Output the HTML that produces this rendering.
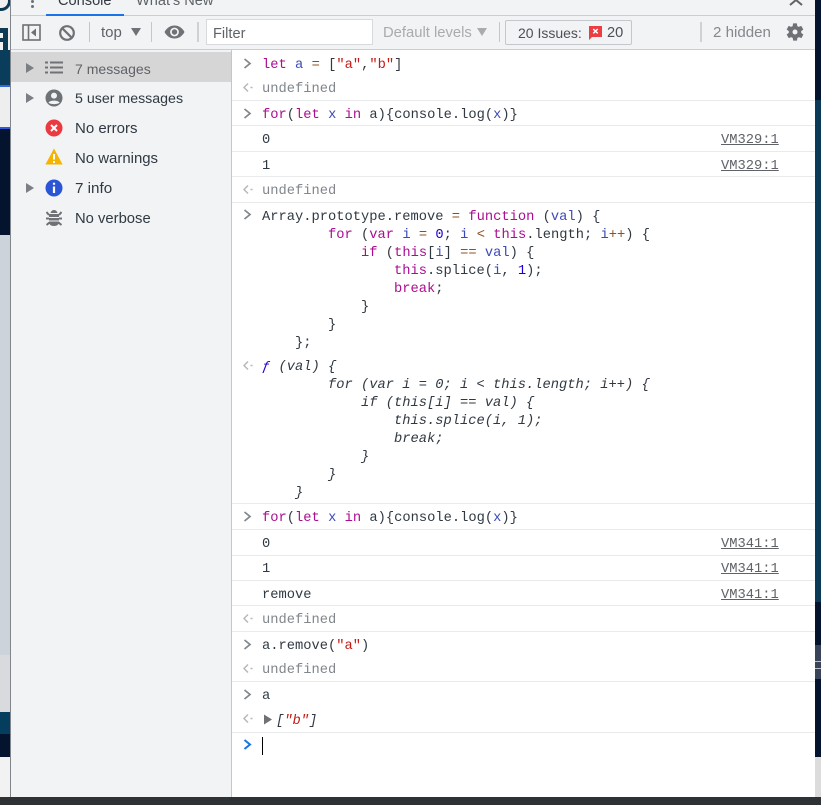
<!DOCTYPE html>
<html><head><meta charset="utf-8"><style>
html,body{margin:0;padding:0;width:821px;height:805px;overflow:hidden;background:#fff}
div,span.a,svg{position:absolute}
.s{font:14.6px/20px "Liberation Sans",sans-serif;color:#303942;white-space:pre}
.c{font:13.75px/18px "Liberation Mono",monospace;color:#303942;white-space:pre;left:262px}
.g{color:#80868b}.i{font-style:italic}
.k{color:#aa0d91}.v{color:#3a4ab8}.t{color:#c41a16}.o{color:#90501c}.n{color:#1c00cf}
.b{left:232px;width:583px;height:1px;background:#e9eaeb}
.l{left:721px;font:13.75px/18px "Liberation Mono",monospace;color:#5f6368;text-decoration:underline}
.sep{width:1px;background:#c4c6c9}
</style></head><body>
<div style="left:0;top:0;width:11px;height:805px;background:#cdd3da;overflow:hidden">
<div style="left:0;top:0;width:11px;height:56px;background:#f0f0f0"></div>
<div style="left:-6px;top:-6px;width:14px;height:14px;border:0 solid #0c3a55;border-width:0 3px 3px 0;border-radius:0 0 10px 0"></div>
<div style="left:0;top:28px;width:8px;height:22px;background:#0c3a55"></div>
<div style="left:0;top:33px;width:3px;height:5px;background:#f0f0f0"></div>
<div style="left:0;top:42px;width:3px;height:8px;background:#f0f0f0"></div>
<div style="left:0;top:50px;width:11px;height:35px;background:#0a3d5c"></div>
<div style="left:0;top:85px;width:11px;height:2px;background:#2f6be0"></div>
<div style="left:0;top:87px;width:11px;height:40px;background:#eeeeee"></div>
<div style="left:0;top:127px;width:11px;height:2px;background:#2f5ae0"></div>
<div style="left:0;top:129px;width:11px;height:106px;background:#04142f"></div>
<div style="left:0;top:655px;width:11px;height:57px;background:#d8dade"></div>
<div style="left:0;top:712px;width:11px;height:22px;background:#053d5e"></div>
<div style="left:0;top:734px;width:11px;height:23px;background:#04142f"></div>
<div style="left:0;top:757px;width:11px;height:40px;background:#f2f2f2"></div>
<div style="left:10px;top:0;width:1px;height:797px;background:#80868b"></div>
</div>
<div style="left:815px;top:0;width:6px;height:805px;background:#04142f">
<div style="left:0;top:100px;width:6px;height:502px;background:#0a3a58"></div>
<div style="left:0;top:645px;width:6px;height:34px;background:#3a4458"></div>
<div style="left:0;top:661px;width:6px;height:1px;background:#b9bdc4"></div>
<div style="left:0;top:668px;width:6px;height:1px;background:#b9bdc4"></div>
<div style="left:0;top:757px;width:6px;height:40px;background:#dcdcdc"></div>
</div>
<div style="left:0;top:797px;width:821px;height:8px;background:#2f3234"></div>

<div style="left:11px;top:0;width:804px;height:797px;background:#fff;overflow:hidden">
<div style="left:-11px;top:0;width:815px;height:797px">
<div style="left:11px;top:0;width:804px;height:49px;background:#f1f3f4"></div>
<div style="left:11px;top:15px;width:804px;height:1px;background:#cbcdd0"></div>
<div style="left:11px;top:49px;width:804px;height:1px;background:#cbcdd0"></div>
<div style="left:46px;top:14px;width:78px;height:2px;background:#1a73e8"></div>
<div class="s" style="left:58px;top:-9px;color:#303942">Console</div>
<div class="s" style="left:136px;top:-9px;color:#5f6368">What's New</div>
<div style="left:31px;top:0;width:3px;height:3px;background:#6e7175;border-radius:50%"></div>
<div style="left:31px;top:5px;width:3px;height:3px;background:#6e7175;border-radius:50%"></div>
<svg style="left:789px;top:0" width="14" height="6"><path d="M1 5 L7 0 L13 5" fill="none" stroke="#5f6368" stroke-width="2"/></svg>

<svg style="left:22px;top:24px" width="20" height="18"><rect x="1" y="1" width="17" height="15" fill="none" stroke="#6e7175" stroke-width="1.6"/><path d="M6.5 1V16" stroke="#6e7175" stroke-width="1.6"/><path d="M14 4.5V12.5L9 8.5Z" fill="#6e7175"/></svg>
<svg style="left:58px;top:24px" width="18" height="18"><circle cx="9" cy="9" r="6.8" fill="none" stroke="#6e7175" stroke-width="2.2"/><path d="M4.2 4.2L13.8 13.8" stroke="#6e7175" stroke-width="2.2"/></svg>
<div class="sep" style="left:89px;top:22px;height:20px"></div>
<div class="s" style="left:101px;top:23px;color:#5f6368;font-size:15px">top</div>
<svg style="left:130px;top:27px" width="12" height="10"><path d="M1 1H11L6 9Z" fill="#6e7175"/></svg>
<div class="sep" style="left:151px;top:22px;height:20px"></div>
<svg style="left:164px;top:23px" width="21" height="18"><path d="M0.5 9C3 4.5 6.5 2.5 10.5 2.5S18 4.5 20.5 9C18 13.5 14.5 15.5 10.5 15.5S3 13.5 0.5 9Z" fill="#6e7175"/><circle cx="10.5" cy="9" r="4.4" fill="#f1f3f4"/><circle cx="10.5" cy="9" r="2.7" fill="#6e7175"/></svg>
<div style="left:197px;top:22px;width:2px;height:20px;background:#cfd1d3"></div>
<div style="left:206px;top:19px;width:165px;height:24px;background:#fff;border:1px solid #d8dade"></div>
<div class="s" style="left:213px;top:24px;color:#5f6368">Filter</div>
<div class="s" style="left:383px;top:23px;color:#a9abae;font-size:14.8px">Default levels</div>
<svg style="left:476px;top:27px" width="12" height="10"><path d="M1 1H11L6 9Z" fill="#a9abae"/></svg>
<div class="sep" style="left:499px;top:22px;height:20px"></div>
<div style="left:505px;top:20px;width:125px;height:23px;border:1px solid #c4c7cb;border-radius:2px"></div>
<div class="s" style="left:518px;top:23px;color:#4c5157;font-size:14px">20 Issues:</div>
<svg style="left:588px;top:25px" width="15" height="15"><path d="M1 1H14V12H4L1 15Z" fill="#ea3e43"/><path d="M5.3 4L9.7 8.4M9.7 4L5.3 8.4" stroke="#fff" stroke-width="1.5"/></svg>
<div class="s" style="left:607px;top:23px;color:#4c5157">20</div>
<div style="left:700px;top:22px;width:2px;height:20px;background:#cfd1d3"></div>
<div class="s" style="left:713px;top:23px;color:#85888c;font-size:15.1px">2 hidden</div>
<svg style="left:785px;top:22px" width="20" height="20" viewBox="0 0 24 24"><path fill="#6e7175" d="M19.4 13a7.5 7.5 0 0 0 0-2l2.6-2-2.5-4.3-3 1.2a7.6 7.6 0 0 0-1.8-1L14.3 1.7H9.7L9.2 4.9a7.6 7.6 0 0 0-1.8 1l-3-1.2L2 9l2.6 2a7.5 7.5 0 0 0 0 2L2 15l2.5 4.3 3-1.2a7.6 7.6 0 0 0 1.8 1l.5 3.2h4.6l.5-3.2a7.6 7.6 0 0 0 1.8-1l3 1.2L22 15zM12 15a3 3 0 1 1 0-6 3 3 0 0 1 0 6z"/></svg>

<div style="left:11px;top:50px;width:220px;height:747px;background:#f1f3f4"></div>
<div style="left:231px;top:50px;width:1px;height:747px;background:#c4c7ca"></div>
<div style="left:11px;top:52px;width:220px;height:30px;background:#d6d6d6"></div>
<svg style="left:26px;top:62px" width="9" height="12"><path d="M0 1V11L8 6Z" fill="#7b7e82"/></svg>
<svg style="left:26px;top:92px" width="9" height="12"><path d="M0 1V11L8 6Z" fill="#7b7e82"/></svg>
<svg style="left:26px;top:182px" width="9" height="12"><path d="M0 1V11L8 6Z" fill="#7b7e82"/></svg>
<svg style="left:45px;top:60px" width="18" height="16"><path d="M0 2.5H3M5 2.5H18M0 7.5H3M5 7.5H18M0 12.5H3M5 12.5H18" stroke="#6e7175" stroke-width="2"/></svg>
<svg style="left:45px;top:89px" width="18" height="18"><circle cx="9" cy="9" r="8.5" fill="#6e7175"/><circle cx="9" cy="6.6" r="3" fill="#f1f3f4"/><path d="M3.5 13.6C5 11 13 11 14.5 13.6C13 15.6 5 15.6 3.5 13.6Z" fill="#f1f3f4"/></svg>
<svg style="left:45px;top:119px" width="18" height="18"><circle cx="9" cy="9" r="8.5" fill="#eb3941"/><path d="M6 6L12 12M12 6L6 12" stroke="#fff" stroke-width="2"/></svg>
<svg style="left:45px;top:148px" width="18" height="18"><path d="M9 .5L17.6 16.5H.4Z" fill="#f4b400"/><path d="M9 6V11.5M9 13V15" stroke="#fff" stroke-width="2"/></svg>
<svg style="left:45px;top:179px" width="18" height="18"><circle cx="9" cy="9" r="8.5" fill="#2a56d6"/><path d="M9 7.5V14M9 3.8V5.8" stroke="#fff" stroke-width="2.2"/></svg>
<svg style="left:46px;top:209px" width="16" height="18"><path d="M3 5H13V13C13 15.5 11 17 8 17S3 15.5 3 13ZM4.5 4C5 2 6.5 1 8 1S11 2 11.5 4Z" fill="#6e7175"/><path d="M0.5 3L3 6M15.5 3L13 6M0 9.5H3M13 9.5H16M0.5 16L3.5 13.5M15.5 16L12.5 13.5" stroke="#6e7175" stroke-width="2"/><path d="M3 8.5H13M3 12H13" stroke="#f1f3f4" stroke-width="1"/></svg>
<div class="s" style="left:75px;top:59px;color:#5f6368;font-size:14.05px">7 messages</div>
<div class="s" style="left:75px;top:89px;font-size:14.2px">5 user messages</div>
<div class="s" style="left:75px;top:119px;font-size:15px">No errors</div>
<div class="s" style="left:75px;top:149px;font-size:14.95px">No warnings</div>
<div class="s" style="left:75px;top:179px;font-size:15.2px">7 info</div>
<div class="s" style="left:75px;top:209px;font-size:14.8px">No verbose</div>

<div class="b" style="top:100px"></div><div class="b" style="top:125px"></div><div class="b" style="top:151px"></div><div class="b" style="top:176px"></div><div class="b" style="top:202px"></div>
<div class="b" style="top:503px"></div><div class="b" style="top:529px"></div><div class="b" style="top:555px"></div><div class="b" style="top:580px"></div><div class="b" style="top:605px"></div><div class="b" style="top:631px"></div><div class="b" style="top:681px"></div><div class="b" style="top:732px"></div>

<div class="c" style="top:57px"><span class="k">let</span> <span class="v">a</span> <span class="o">=</span> [<span class="t">"a"</span>,<span class="t">"b"</span>]</div>
<div class="c g" style="top:81px">undefined</div>
<div class="c" style="top:107px"><span class="k">for</span>(<span class="k">let</span> <span class="v">x</span> <span class="k">in</span> a){console.log(<span class="v">x</span>)}</div>
<div class="c" style="top:132px">0</div><div class="l" style="top:132px">VM329:1</div>
<div class="c" style="top:158px">1</div><div class="l" style="top:158px">VM329:1</div>
<div class="c g" style="top:183px">undefined</div>
<div class="c" style="top:209px">Array.prototype.remove <span class="o">=</span> <span class="k">function</span> (<span class="v">val</span>) {
        <span class="k">for</span> (<span class="k">var</span> <span class="v">i</span> <span class="o">=</span> <span class="n">0</span>; <span class="v">i</span> <span class="o">&lt;</span> <span class="k">this</span>.length; <span class="v">i</span><span class="o">++</span>) {
            <span class="k">if</span> (<span class="k">this</span>[<span class="v">i</span>] <span class="o">==</span> <span class="v">val</span>) {
                <span class="k">this</span>.splice(<span class="v">i</span>, <span class="n">1</span>);
                <span class="k">break</span>;
            }
        }
    };</div>
<div class="c i" style="top:359px"><span style="color:#1c00cf">ƒ</span> (val) {
        for (var i = 0; i &lt; this.length; i++) {
            if (this[i] == val) {
                this.splice(i, 1);
                break;
            }
        }
    }</div>
<div class="c" style="top:510px"><span class="k">for</span>(<span class="k">let</span> <span class="v">x</span> <span class="k">in</span> a){console.log(<span class="v">x</span>)}</div>
<div class="c" style="top:536px">0</div><div class="l" style="top:536px">VM341:1</div>
<div class="c" style="top:561px">1</div><div class="l" style="top:561px">VM341:1</div>
<div class="c" style="top:587px">remove</div><div class="l" style="top:587px">VM341:1</div>
<div class="c g" style="top:612px">undefined</div>
<div class="c" style="top:638px">a.remove(<span class="t">"a"</span>)</div>
<div class="c g" style="top:662px">undefined</div>
<div class="c" style="top:688px">a</div>
<div class="c i" style="top:713px;left:276px">[<span class="t">"b"</span>]</div>
<svg style="left:264px;top:714px" width="9" height="11"><path d="M0 .5V10.5L8 5.5Z" fill="#6e7175"/></svg>
<div style="left:262px;top:737px;width:1px;height:18px;background:#000"></div>

<svg style="left:243px;top:58px" width="9" height="11"><path d="M1.5 1L7 5.5L1.5 10" fill="none" stroke="#80868b" stroke-width="1.7"/></svg>
<svg style="left:243px;top:108px" width="9" height="11"><path d="M1.5 1L7 5.5L1.5 10" fill="none" stroke="#80868b" stroke-width="1.7"/></svg>
<svg style="left:243px;top:209px" width="9" height="11"><path d="M1.5 1L7 5.5L1.5 10" fill="none" stroke="#80868b" stroke-width="1.7"/></svg>
<svg style="left:243px;top:511px" width="9" height="11"><path d="M1.5 1L7 5.5L1.5 10" fill="none" stroke="#80868b" stroke-width="1.7"/></svg>
<svg style="left:243px;top:639px" width="9" height="11"><path d="M1.5 1L7 5.5L1.5 10" fill="none" stroke="#80868b" stroke-width="1.7"/></svg>
<svg style="left:243px;top:689px" width="9" height="11"><path d="M1.5 1L7 5.5L1.5 10" fill="none" stroke="#80868b" stroke-width="1.7"/></svg>
<svg style="left:243px;top:739px" width="9" height="11"><path d="M1.5 1L7 5.5L1.5 10" fill="none" stroke="#1a73e8" stroke-width="2"/></svg>

<svg style="left:243px;top:82px" width="10" height="11"><path d="M5 1.5L1 5.5L5 9.5M7.5 5.5H9.5" fill="none" stroke="#b5b7ba" stroke-width="1.5"/></svg>
<svg style="left:243px;top:184px" width="10" height="11"><path d="M5 1.5L1 5.5L5 9.5M7.5 5.5H9.5" fill="none" stroke="#b5b7ba" stroke-width="1.5"/></svg>
<svg style="left:243px;top:360px" width="10" height="11"><path d="M5 1.5L1 5.5L5 9.5M7.5 5.5H9.5" fill="none" stroke="#b5b7ba" stroke-width="1.5"/></svg>
<svg style="left:243px;top:613px" width="10" height="11"><path d="M5 1.5L1 5.5L5 9.5M7.5 5.5H9.5" fill="none" stroke="#b5b7ba" stroke-width="1.5"/></svg>
<svg style="left:243px;top:663px" width="10" height="11"><path d="M5 1.5L1 5.5L5 9.5M7.5 5.5H9.5" fill="none" stroke="#b5b7ba" stroke-width="1.5"/></svg>
<svg style="left:243px;top:713px" width="10" height="11"><path d="M5 1.5L1 5.5L5 9.5M7.5 5.5H9.5" fill="none" stroke="#b5b7ba" stroke-width="1.5"/></svg>
</div></div>
</body></html>
